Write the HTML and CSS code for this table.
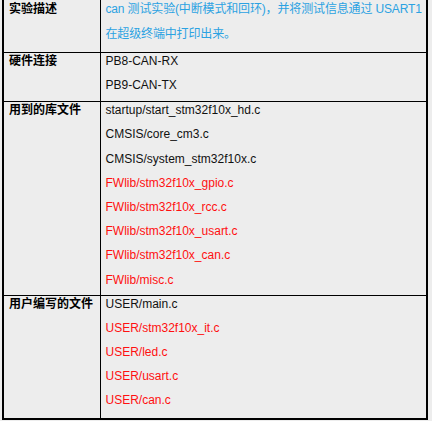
FILE: index.html
```html
<!DOCTYPE html>
<html lang="zh-CN">

<head>
    <meta charset="UTF-8">
    <meta name="viewport" content="width=device-width, initial-scale=1.0">
    <title>CAN 实验</title>
    <link rel="stylesheet" href="styles.css">
</head>

<body>
    <table class="info-table">
        <colgroup>
            <col class="label-col">
            <col>
        </colgroup>
        <tr class="intro-row">
            <td class="label">实验描述</td>
            <td class="value">
                <p class="intro">can 测试实验(中断模式和回环)，并将测试信息通过 USART1<br>在超级终端中打印出来。</p>
            </td>
        </tr>
        <tr class="wiring-row">
            <td class="label">硬件连接</td>
            <td class="value">
                <p>PB8-CAN-RX</p>
                <p>PB9-CAN-TX</p>
            </td>
        </tr>
        <tr>
            <td class="label">用到的库文件</td>
            <td class="value">
                <p>startup/start_stm32f10x_hd.c</p>
                <p>CMSIS/core_cm3.c</p>
                <p>CMSIS/system_stm32f10x.c</p>
                <p class="red">FWlib/stm32f10x_gpio.c</p>
                <p class="red">FWlib/stm32f10x_rcc.c</p>
                <p class="red">FWlib/stm32f10x_usart.c</p>
                <p class="red">FWlib/stm32f10x_can.c</p>
                <p class="red">FWlib/misc.c</p>
            </td>
        </tr>
        <tr class="user-row">
            <td class="label">用户编写的文件</td>
            <td class="value">
                <p>USER/main.c</p>
                <p class="red">USER/stm32f10x_it.c</p>
                <p class="red">USER/led.c</p>
                <p class="red">USER/usart.c</p>
                <p class="red">USER/can.c</p>
            </td>
        </tr>
    </table>
</body>

</html>
```

FILE: styles.css
```css
body,
body * {
    padding: 0;
    margin: 0;
    box-sizing: border-box;
    font-family: 'Liberation Sans', 'Noto Sans CJK SC', sans-serif;
}

body {
    background-color: #ededed;
    color: #111;
    font-size: 12px;
}

.info-table {
    width: 426px;
    margin: -5px 0 0 2px;
    border-collapse: collapse;
    table-layout: fixed;
    border: 2px solid #000;
}

.info-table .label-col {
    width: 97px;
}

.info-table td {
    border: 1px solid #000;
    vertical-align: top;
    padding: 0 2px 7px 5px;
}

.info-table .label {
    font-weight: bold;
    line-height: 16px;
    padding-left: 5px;
    color: #000;
}

.value p {
    line-height: 16px;
    margin-bottom: 8.2px;
}

.value p:last-child {
    margin-bottom: 0;
}

.intro-row .label {
    padding-top: 4px;
}

.intro-row .value {
    padding-bottom: 5px;
}

.wiring-row td {
    padding-bottom: 8px;
}

.user-row td {
    padding-bottom: 10px;
}

.value .intro {
    line-height: 25px;
    white-space: nowrap;
    letter-spacing: -0.15px;
    color: #2ba2e2;
}

.red {
    color: #ff1010;
}
```
